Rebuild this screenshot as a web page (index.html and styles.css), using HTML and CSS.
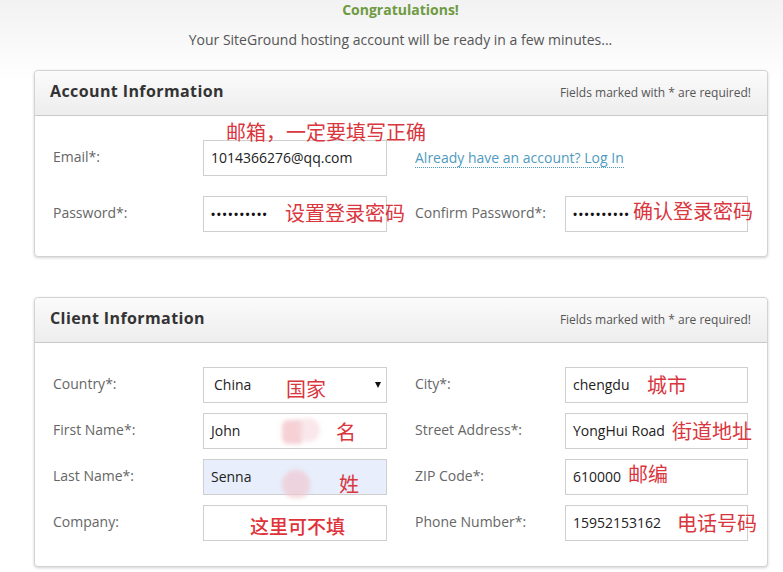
FILE: index.html
```html
<!DOCTYPE html>
<html lang="zh-CN">
<head>
    <meta charset="UTF-8">
    <title>SiteGround - Account</title>
    <link rel="stylesheet" href="styles.css">
</head>
<body>
    <div class="intro">
        <h1>Congratulations!</h1>
        <p>Your SiteGround hosting account will be ready in a few minutes...</p>
    </div>

    <div class="box">
        <div class="box-head">
            <h2>Account Information</h2>
            <span class="note">Fields marked with * are required!</span>
        </div>
        <div class="box-body grid loose">
            <label>Email*:</label>
            <div class="field">1014366276@qq.com<span class="mark" style="left:22px;top:-19px">邮箱，一定要填写正确</span></div>
            <div class="login-cell"><a class="login" href="#">Already have an account? Log In</a></div>

            <label>Password*:</label>
            <div class="field"><span class="dots">••••••••••</span><span class="mark" style="left:81px;top:6px">设置登录密码</span></div>
            <label class="right">Confirm Password*:</label>
            <div class="field"><span class="dots">••••••••••</span><span class="mark" style="left:67px;top:4px">确认登录密码</span></div>
        </div>
    </div>

    <div class="box">
        <div class="box-head">
            <h2>Client Information</h2>
            <span class="note">Fields marked with * are required!</span>
        </div>
        <div class="box-body grid">
            <label>Country*:</label>
            <div class="field select">China<span class="arrow"></span><span class="mark" style="left:82px;top:11px">国家</span></div>
            <label class="right">City*:</label>
            <div class="field">chengdu<span class="mark" style="left:81px;top:7px">城市</span></div>

            <label>First Name*:</label>
            <div class="field">John<span class="smudge a"></span><span class="smudge b"></span><span class="mark" style="left:132px;top:8px">名</span></div>
            <label class="right">Street Address*:</label>
            <div class="field">YongHui Road<span class="mark" style="left:106px;top:7px">街道地址</span></div>

            <label>Last Name*:</label>
            <div class="field filled">Senna<span class="smudge c"></span><span class="mark" style="left:135px;top:14px">姓</span></div>
            <label class="right">ZIP Code*:</label>
            <div class="field">610000<span class="mark" style="left:62px;top:4px">邮编</span></div>

            <label>Company:</label>
            <div class="field"><span class="mark bold" style="left:46px;top:10px">这里可不填</span></div>
            <label class="right">Phone Number*:</label>
            <div class="field">15952153162<span class="mark" style="left:111px;top:7px">电话号码</span></div>
        </div>
    </div>
</body>
</html>
```

FILE: styles.css
```css
body {
    margin: 0;
    font-family: "Open Sans", "Liberation Sans", sans-serif;
    color: #333;
    background: linear-gradient(#f2f2f2 0, #fafafa 50px, #fff 80px);
    height: 572px;
    overflow: hidden;
}
.intro {
    text-align: center;
    padding-left: 18px;
}
.intro h1 {
    margin: 0;
    font-size: 14px;
    line-height: 19px;
    font-weight: 700;
    color: #6e9a43;
}
.intro p {
    margin: 12px 0 0;
    font-size: 14px;
    line-height: 18px;
    color: #555;
}
.box {
    margin: 21px 15px 0 34px;
    background: #fff;
    border: 1px solid #d3d3d3;
    border-radius: 4px;
    box-shadow: 0 1px 3px rgba(0, 0, 0, 0.18);
}
.box + .box {
    margin-top: 40px;
}
.box-head {
    height: 45px;
    box-sizing: border-box;
    display: flex;
    align-items: center;
    justify-content: space-between;
    padding: 0 16px 4px 15px;
    background: linear-gradient(#fbfbfb, #ededed);
    border-bottom: 1px solid #c9c9c9;
    border-radius: 4px 4px 0 0;
}
.box-head h2 {
    margin: 0;
    font-size: 16px;
    font-weight: 700;
    color: #333;
    letter-spacing: 0.4px;
}
.note {
    font-size: 12px;
    color: #555;
    padding-top: 3px;
}
.grid {
    display: grid;
    grid-template-columns: 150px 184px 178px 183px;
    grid-auto-rows: 36px;
    row-gap: 10px;
    align-items: center;
    padding: 24px 19px 25px 18px;
}
.grid.loose {
    row-gap: 20px;
    padding-top: 24px;
    padding-bottom: 24px;
}
.grid label {
    font-size: 14px;
    color: #666;
    margin-bottom: 3px;
}
.grid label.right {
    padding-left: 28px;
}
.login-cell {
    grid-column: span 2;
    padding-left: 28px;
    margin-bottom: 2px;
}
.login {
    font-size: 14px;
    color: #4f9ac0;
    text-decoration: none;
    border-bottom: 1px dotted #4f9ac0;
    white-space: nowrap;
}
.field {
    position: relative;
    height: 36px;
    box-sizing: border-box;
    border: 1px solid #cfcfcf;
    background: #fff;
    padding: 0 7px 1px;
    display: flex;
    align-items: center;
    font-size: 14px;
    color: #222;
}
.field.select {
    padding-left: 10px;
}
.field.filled {
    background: #e8eefb;
}
.dots {
    font-size: 11px;
    letter-spacing: 1.6px;
    color: #111;
    font-weight: 700;
}
.arrow {
    position: absolute;
    right: 5px;
    top: 14px;
    border-left: 3.5px solid transparent;
    border-right: 3.5px solid transparent;
    border-top: 6px solid #111;
}
.mark {
    position: absolute;
    white-space: nowrap;
    font-family: "Noto Sans CJK SC", sans-serif;
    font-size: 20px;
    line-height: 20px;
    color: #d9363e;
    font-weight: 400;
}
.mark.bold {
    font-size: 19px;
    color: #e0323a;
    font-weight: 500;
}
.smudge {
    position: absolute;
    background: rgba(236, 170, 178, 0.55);
    filter: blur(2px);
}
.smudge.a {
    left: 78px;
    top: 6px;
    width: 20px;
    height: 24px;
    border-radius: 6px 2px 2px 6px;
}
.smudge.b {
    left: 92px;
    top: 4px;
    width: 24px;
    height: 24px;
    border-radius: 50%;
    background: rgba(245, 215, 218, 0.6);
}
.smudge.c {
    left: 78px;
    top: 10px;
    width: 28px;
    height: 28px;
    border-radius: 50% 50% 40% 45%;
    background: rgba(240, 200, 208, 0.7);
}
```
